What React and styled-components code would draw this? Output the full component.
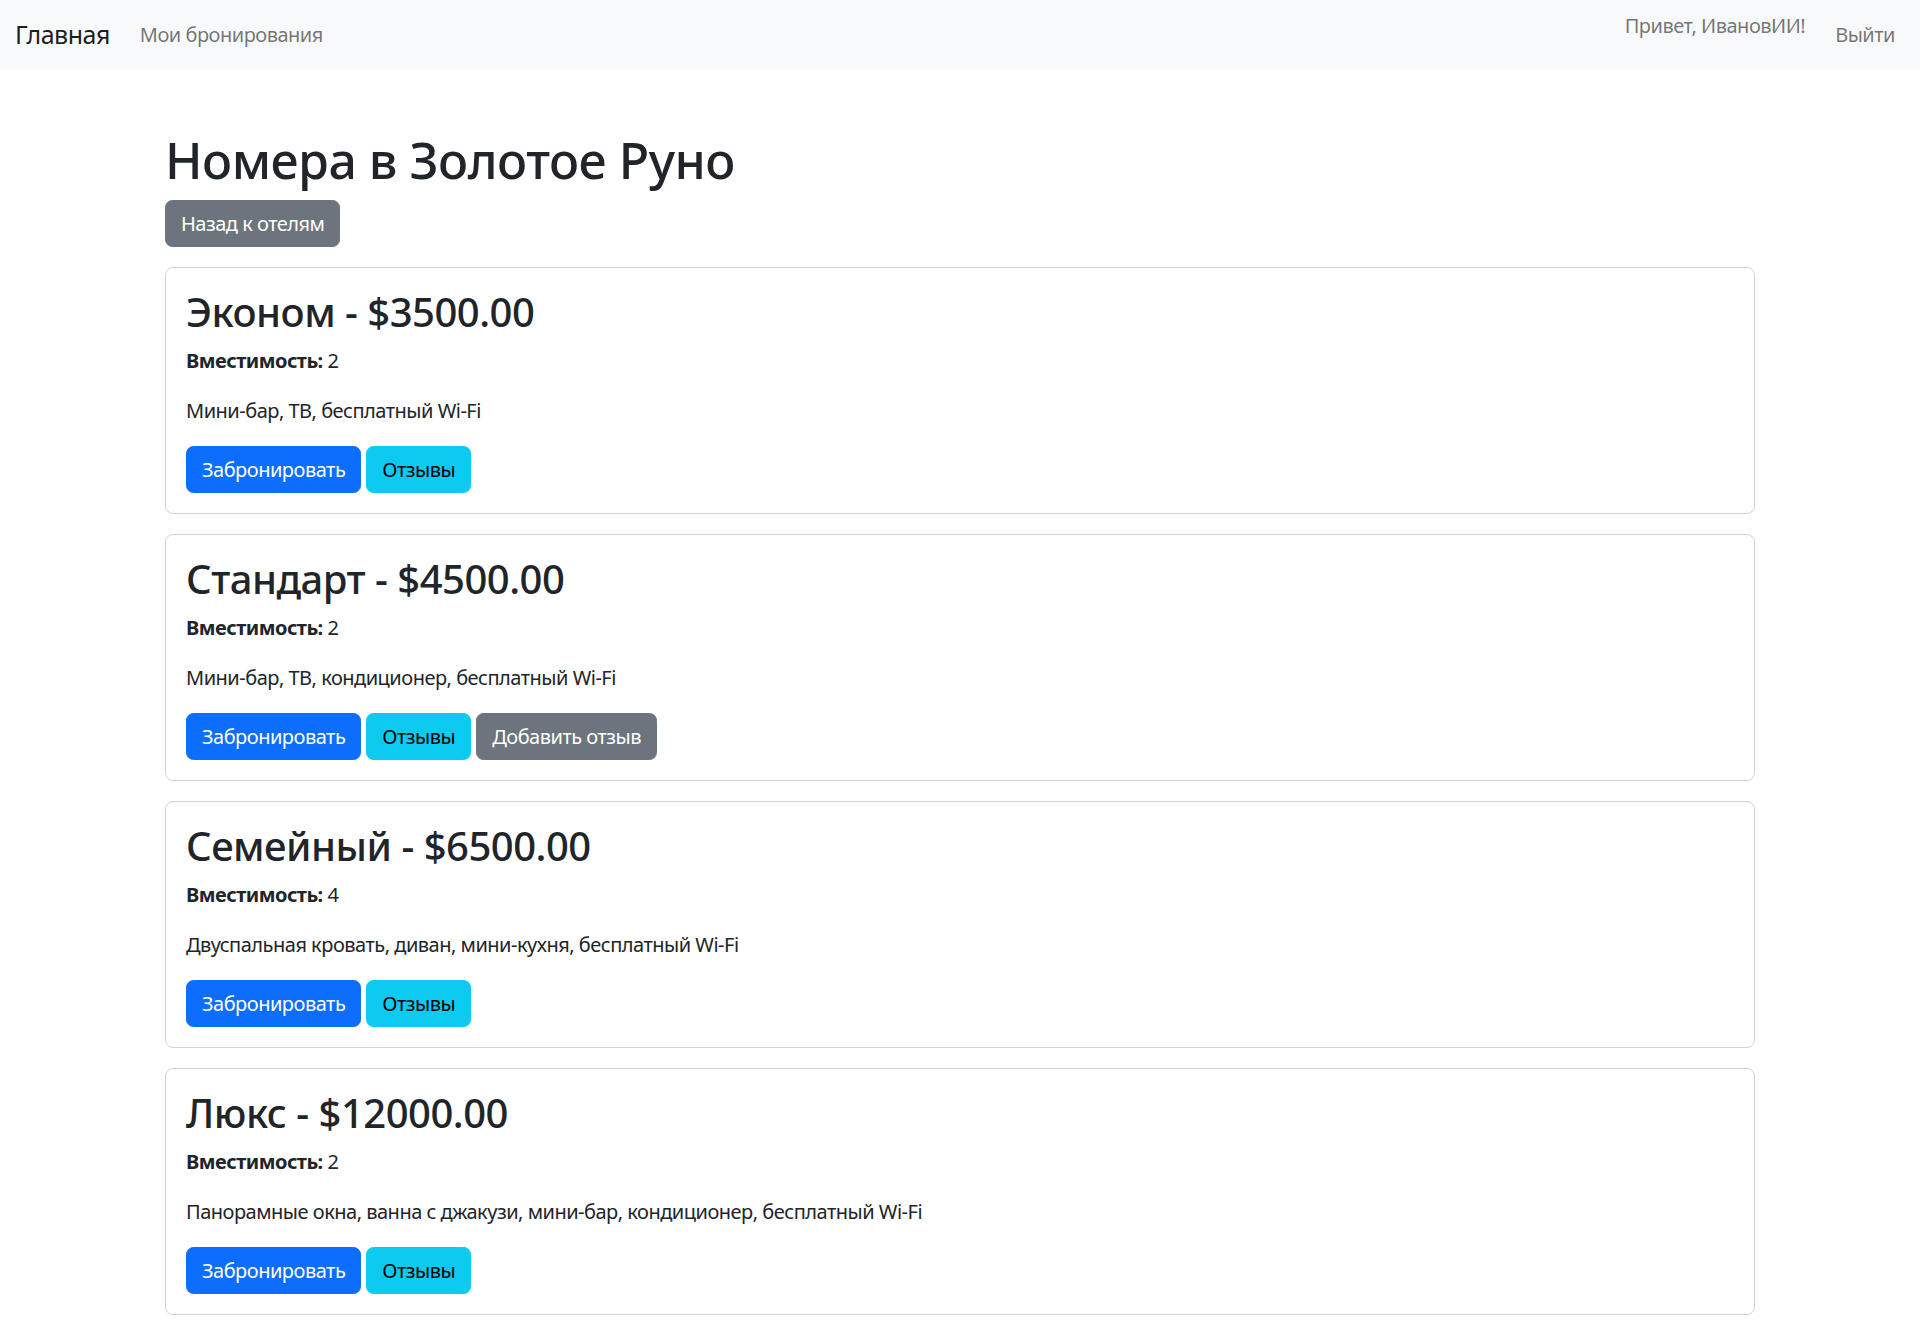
import React from 'react'
import styled, { createGlobalStyle } from 'styled-components'

const GlobalStyle = createGlobalStyle`
  * { box-sizing: border-box; }
  body {
    margin: 0;
    font-family: "Noto Sans", "Open Sans", "Liberation Sans", sans-serif;
    font-size: 20px;
    line-height: 1.5;
    letter-spacing: -0.025em;
    color: #212529;
    background: #fff;
  }
`

const Navbar = styled.nav`
  background: #f8f9fa;
  padding: 10px 15px;
  display: flex;
  align-items: center;
  justify-content: space-between;
`
const NavLeft = styled.div`
  display: flex;
  align-items: center;
`
const Brand = styled.a`
  font-size: 25px;
  line-height: 37.5px;
  padding: 6px 0;
  margin-right: 20px;
  color: rgba(0, 0, 0, 0.9);
  text-decoration: none;
`
const NavLink = styled.a`
  display: block;
  padding: 10px;
  line-height: 30px;
  color: rgba(0, 0, 0, 0.55);
  text-decoration: none;
`
const NavRight = styled.div`
  display: flex;
  align-items: flex-start;
  align-self: stretch;
`
const Greeting = styled.span`
  color: rgba(0, 0, 0, 0.55);
  margin-right: 20px;
  line-height: 30px;
  margin-top: 1px;
`

const Container = styled.main`
  max-width: 1620px;
  margin: 60px auto 0;
  padding: 0 15px;
`
const PageTitle = styled.h1`
  font-size: 50px;
  font-weight: 500;
  line-height: 1.2;
  margin: 0 0 10px;
`
const Button = styled.button`
  display: inline-block;
  font-family: inherit;
  font-size: 20px;
  line-height: 30px;
  letter-spacing: inherit;
  padding: 7.5px 15px;
  border: 1px solid ${p => p.$bg};
  border-radius: 7.5px;
  background: ${p => p.$bg};
  color: ${p => p.$fg};
  cursor: pointer;
`
const BackRow = styled.div`
  margin-bottom: 20px;
`
const Card = styled.div`
  border: 1px solid rgba(0, 0, 0, 0.175);
  border-radius: 8px;
  padding: 20px;
  margin-bottom: 20px;
`
const CardTitle = styled.h2`
  font-size: 40px;
  font-weight: 500;
  line-height: 1.2;
  margin: 0 0 10px;
`
const Text = styled.p`
  margin: 0 0 20px;
`
const Actions = styled.div`
  display: flex;
  gap: 5px;
`

const colors = {
  primary: ['#0d6efd', '#fff'],
  info: ['#0dcaf0', '#000'],
  secondary: ['#6c757d', '#fff'],
}

const rooms = [
  { name: 'Эконом', price: '3500.00', cap: 2, desc: 'Мини-бар, ТВ, бесплатный Wi-Fi' },
  { name: 'Стандарт', price: '4500.00', cap: 2, desc: 'Мини-бар, ТВ, кондиционер, бесплатный Wi-Fi', review: true },
  { name: 'Семейный', price: '6500.00', cap: 4, desc: 'Двуспальная кровать, диван, мини-кухня, бесплатный Wi-Fi' },
  { name: 'Люкс', price: '12000.00', cap: 2, desc: 'Панорамные окна, ванна с джакузи, мини-бар, кондиционер, бесплатный Wi-Fi' },
]

const Btn = ({ kind, children }) => (
  <Button $bg={colors[kind][0]} $fg={colors[kind][1]}>{children}</Button>
)

export default function App() {
  return (
    <>
      <GlobalStyle />
      <Navbar>
        <NavLeft>
          <Brand href="#">Главная</Brand>
          <NavLink href="#">Мои бронирования</NavLink>
        </NavLeft>
        <NavRight>
          <Greeting>Привет, ИвановИИ!</Greeting>
          <NavLink href="#">Выйти</NavLink>
        </NavRight>
      </Navbar>
      <Container>
        <PageTitle>Номера в Золотое Руно</PageTitle>
        <BackRow>
          <Btn kind="secondary">Назад к отелям</Btn>
        </BackRow>
        {rooms.map(r => (
          <Card key={r.name}>
            <CardTitle>{r.name} - ${r.price}</CardTitle>
            <Text><strong>Вместимость:</strong> {r.cap}</Text>
            <Text>{r.desc}</Text>
            <Actions>
              <Btn kind="primary">Забронировать</Btn>
              <Btn kind="info">Отзывы</Btn>
              {r.review && <Btn kind="secondary">Добавить отзыв</Btn>}
            </Actions>
          </Card>
        ))}
      </Container>
    </>
  )
}
